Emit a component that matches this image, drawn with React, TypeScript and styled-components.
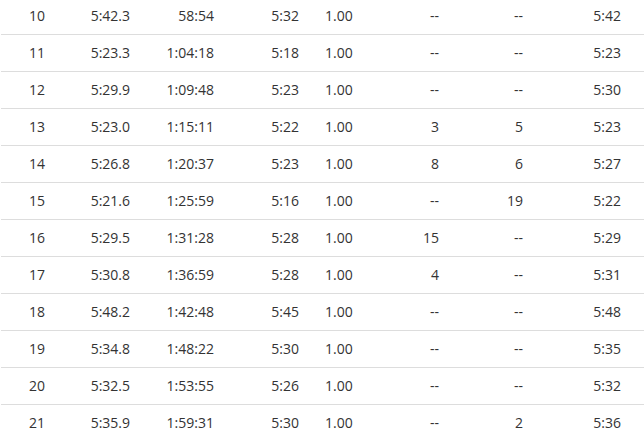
import styled, { createGlobalStyle } from 'styled-components'

const GlobalStyle = createGlobalStyle`
  html, body {
    margin: 0;
    padding: 0;
    background: #fff;
    overflow: hidden;
  }
  body {
    font-family: 'Open Sans', 'Liberation Sans', sans-serif;
    color: #333;
  }
`

const Table = styled.div`
  margin-top: -2px;
  padding-left: 1px;
  width: 643px;
`

const Row = styled.div`
  display: grid;
  grid-template-columns: 79px 50px 84px 85px 81px 59px 84px 98px 1fr;
  height: 36px;
  align-items: center;
  border-bottom: 1px solid #dddddd;
  font-size: 14px;
  line-height: 20px;

  &:last-child {
    border-bottom: 0;
  }
`

const Cell = styled.div<{ $align?: 'left' | 'right'; $pad?: number }>`
  text-align: ${(p) => p.$align ?? 'right'};
  padding-left: ${(p) => p.$pad ?? 0}px;
  white-space: nowrap;
`

type Split = {
  lap: number
  time: string
  elapsed: string
  pace: string
  dist: string
  up: string
  down: string
  gap: string
}

const splits: Split[] = [
  { lap: 10, time: '5:42.3', elapsed: '58:54', pace: '5:32', dist: '1.00', up: '--', down: '--', gap: '5:42' },
  { lap: 11, time: '5:23.3', elapsed: '1:04:18', pace: '5:18', dist: '1.00', up: '--', down: '--', gap: '5:23' },
  { lap: 12, time: '5:29.9', elapsed: '1:09:48', pace: '5:23', dist: '1.00', up: '--', down: '--', gap: '5:30' },
  { lap: 13, time: '5:23.0', elapsed: '1:15:11', pace: '5:22', dist: '1.00', up: '3', down: '5', gap: '5:23' },
  { lap: 14, time: '5:26.8', elapsed: '1:20:37', pace: '5:23', dist: '1.00', up: '8', down: '6', gap: '5:27' },
  { lap: 15, time: '5:21.6', elapsed: '1:25:59', pace: '5:16', dist: '1.00', up: '--', down: '19', gap: '5:22' },
  { lap: 16, time: '5:29.5', elapsed: '1:31:28', pace: '5:28', dist: '1.00', up: '15', down: '--', gap: '5:29' },
  { lap: 17, time: '5:30.8', elapsed: '1:36:59', pace: '5:28', dist: '1.00', up: '4', down: '--', gap: '5:31' },
  { lap: 18, time: '5:48.2', elapsed: '1:42:48', pace: '5:45', dist: '1.00', up: '--', down: '--', gap: '5:48' },
  { lap: 19, time: '5:34.8', elapsed: '1:48:22', pace: '5:30', dist: '1.00', up: '--', down: '--', gap: '5:35' },
  { lap: 20, time: '5:32.5', elapsed: '1:53:55', pace: '5:26', dist: '1.00', up: '--', down: '--', gap: '5:32' },
  { lap: 21, time: '5:35.9', elapsed: '1:59:31', pace: '5:30', dist: '1.00', up: '--', down: '2', gap: '5:36' },
]

export default function App() {
  return (
    <>
      <GlobalStyle />
      <Table>
        {splits.map((s) => (
          <Row key={s.lap}>
            <Cell $align="left" $pad={28}>{s.lap}</Cell>
            <Cell>{s.time}</Cell>
            <Cell>{s.elapsed}</Cell>
            <Cell>{s.pace}</Cell>
            <Cell $align="left" $pad={26}>{s.dist}</Cell>
            <Cell>{s.up}</Cell>
            <Cell>{s.down}</Cell>
            <Cell>{s.gap}</Cell>
            <Cell />
          </Row>
        ))}
      </Table>
    </>
  )
}
